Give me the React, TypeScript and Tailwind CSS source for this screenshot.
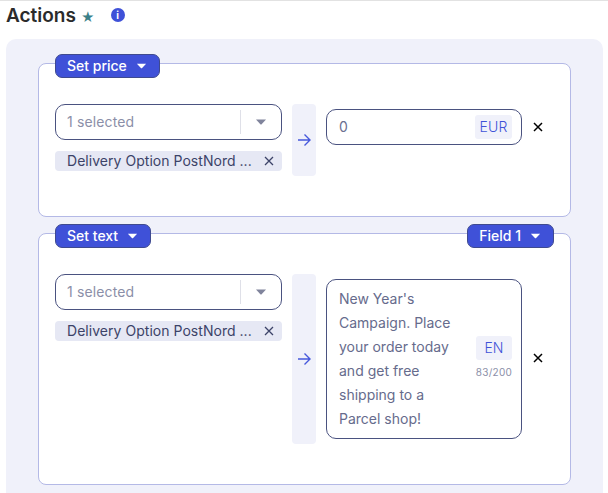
import React from "react";

const Caret = ({ className = "" }: { className?: string }) => (
  <svg width="12" height="6" viewBox="0 0 12 6" className={className}>
    <path d="M1 0.5h10L6.4 5.4a.6.6 0 0 1-.8 0z" fill="currentColor" />
  </svg>
);

const Cross = ({ className = "", w = 1.5 }: { className?: string; w?: number }) => (
  <svg width="10" height="10" viewBox="0 0 10 10" className={className}>
    <path d="M1 1l8 8M9 1l-8 8" stroke="currentColor" strokeWidth={w} fill="none" />
  </svg>
);

const Arrow = () => (
  <svg width="14" height="14" viewBox="0 0 14 14" className="text-[#4658dc]">
    <path d="M1 7h11.5M7.5 1.5L13 7l-5.5 5.5" stroke="currentColor" strokeWidth="1.4" fill="none" />
  </svg>
);

const Pill = ({ label }: { label: string }) => (
  <button className="flex h-6 items-center gap-[9px] rounded-[7px] border border-[#3f4a8f] bg-[#3f51d8] pb-px pl-[11px] pr-3 text-[14px] font-medium text-white">
    {label}
    <Caret className="mt-px w-[11px]" />
  </button>
);

const LeftColumn = () => (
  <div className="flex w-[227px] shrink-0 flex-col gap-[11px]">
    <div className="flex h-9 items-center rounded-[10px] border border-[#4a5280] bg-white">
      <span className="flex-1 pb-px pl-[11px] text-[14px] tracking-[0.01em] text-[#8b8fa8]">1 selected</span>
      <span className="h-6 w-px bg-[#dfe0e8]" />
      <span className="flex w-10 justify-center text-[#80849c]">
        <Caret />
      </span>
    </div>
    <div className="flex h-5 items-center justify-between rounded-[4px] bg-[#e6e8f4] pb-0.5 pl-3 pr-[8px] text-[14px] tracking-[0.035px] text-[#3c4368]">
      <span className="whitespace-nowrap">Delivery Option PostNord ...</span>
      <Cross className="mt-0.5 text-[#3c4368]" w={1.3} />
    </div>
  </div>
);

const ArrowBlock = ({ h }: { h: string }) => (
  <div className={`flex w-6 shrink-0 items-center justify-center rounded-[4px] bg-[#f0f1fa] ${h}`}>
    <Arrow />
  </div>
);

export default function App() {
  return (
    <div className="h-[493px] w-[608px] overflow-hidden border-t border-[#e2e2e2] bg-white font-['Inter',sans-serif]">
      <div className="flex h-[38px] items-center pb-2.5 pl-1.5">
        <h2 className="text-[19px] font-semibold leading-none text-[#2b2b2b]">Actions</h2>
        <span className="ml-[5px] mt-[5px] text-[13px] leading-none text-[#3b8088]">★</span>
        <span className="ml-[16px] flex h-[14px] w-[14px] items-center justify-center rounded-full bg-[#3f51d8] text-[10px] font-bold leading-none text-white">
          i
        </span>
      </div>
      <div className="ml-1.5 flex w-[597px] flex-col gap-4 rounded-t-[10px] bg-[#f0f1fa] px-8 pt-6 pb-2">
        <section className="relative h-[154px] rounded-[8px] border border-[#b4b9e6] bg-white pt-10 pl-4">
          <div className="absolute left-4 -top-[10px]">
            <Pill label="Set price" />
          </div>
          <div className="flex items-start gap-2.5">
            <LeftColumn />
            <ArrowBlock h="h-[72px]" />
            <div className="mt-[5px] flex h-9 w-[196px] items-center justify-between rounded-[10px] border border-[#4a5280] pl-3 pr-[9px]">
              <span className="pb-0.5 text-[14px] text-[#6b7090]">0</span>
              <span className="flex h-6 w-[37px] items-center justify-center rounded-[3px] bg-[#f0f1fa] pb-px text-[14px] font-light tracking-[0.01em] text-[#3f51d8]">
                EUR
              </span>
            </div>
            <Cross className="mt-[18px] ml-[1px] text-black" />
          </div>
        </section>
        <section className="relative h-[252px] rounded-[8px] border border-[#b4b9e6] bg-white pt-10 pl-4">
          <div className="absolute left-4 -top-[10px]">
            <Pill label="Set text" />
          </div>
          <div className="absolute right-4 -top-[10px]">
            <Pill label="Field 1" />
          </div>
          <div className="flex items-start gap-2.5">
            <LeftColumn />
            <ArrowBlock h="h-[170px]" />
            <div className="mt-[5px] flex h-40 w-[196px] items-center justify-between rounded-[10px] border border-[#4a5280] pl-3 pr-[9px]">
              <p className="w-[125px] text-[14px] leading-6 text-[#666b8c]">
                New Year's Campaign. Place your order today and get free shipping to a Parcel shop!
              </p>
              <div className="relative -top-[1px] flex flex-col items-center gap-1">
                <span className="flex h-6 w-9 items-center justify-center rounded-[3px] bg-[#f0f1fa] pb-px text-[14px] font-light text-[#3f51d8]">
                  EN
                </span>
                <span className="text-[10px] leading-4 tracking-wide text-[#8b8fa8]">83/200</span>
              </div>
            </div>
            <Cross className="mt-[79px] ml-[1px] text-black" />
          </div>
        </section>
      </div>
    </div>
  );
}
